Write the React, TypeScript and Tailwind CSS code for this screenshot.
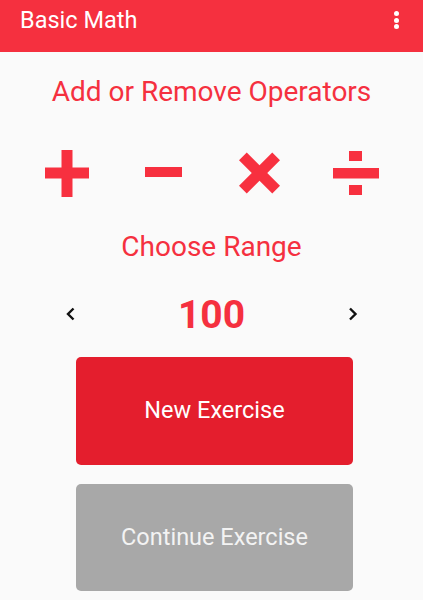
import React from 'react';

const red = 'text-[#f5303f]';

const OperatorIcon: React.FC<{ kind: 'plus' | 'minus' | 'times' | 'divide' }> = ({ kind }) => {
    if (kind === 'plus') {
        return (
            <svg width="44" height="48" viewBox="0 0 44 48" className="fill-[#f7303f]">
                <rect x="16.5" y="0" width="11" height="47" />
                <rect x="0" y="17.5" width="44" height="11" />
            </svg>
        );
    }
    if (kind === 'minus') {
        return (
            <svg width="38" height="48" viewBox="0 0 38 48" className="fill-[#f7303f]">
                <rect x="0" y="17" width="37" height="10" />
            </svg>
        );
    }
    if (kind === 'times') {
        return (
            <svg width="42" height="48" viewBox="0 0 42 48" className="fill-[#f7303f]">
                <g transform="translate(20.5 23) rotate(45)">
                    <rect x="-23.5" y="-5.5" width="47" height="11" />
                    <rect x="-5.5" y="-23.5" width="11" height="47" />
                </g>
            </svg>
        );
    }
    return (
        <svg width="46" height="48" viewBox="0 0 46 48" className="fill-[#f7303f]">
            <rect x="16" y="1" width="13" height="10" />
            <rect x="0" y="18" width="46" height="10.5" />
            <rect x="16" y="35" width="13" height="10" />
        </svg>
    );
};

const Chevron: React.FC<{ dir: 'left' | 'right' }> = ({ dir }) => (
    <svg width="12" height="14" viewBox="0 0 12 14" fill="none" stroke="#111" strokeWidth="2.4" className="mb-[4px]">
        {dir === 'left' ? <path d="M9.5 1.5 4 7 9.5 12.5" /> : <path d="M3 1.5 8.5 7 3 12.5" />}
    </svg>
);

export default function App() {
    return (
        <div className="w-[423px] h-[600px] bg-[#fafafa] overflow-hidden font-['Roboto',sans-serif]">
            <header className="h-[52px] bg-[#f5303f] flex items-start justify-between pl-5 pr-[24px]">
                <h1 className="text-white text-[23.5px] leading-none mt-[9px]">Basic Math</h1>
                <div className="flex flex-col gap-[1.5px] mt-[11px]">
                    <span className="w-[5px] h-[5px] rounded-full bg-white" />
                    <span className="w-[5px] h-[5px] rounded-full bg-white" />
                    <span className="w-[5px] h-[5px] rounded-full bg-white" />
                </div>
            </header>

            <main className="flex flex-col items-center">
                <h2 className={`${red} text-[28px] leading-none mt-[26px]`}>Add or Remove Operators</h2>

                <div className="w-full flex items-center pl-[45px] mt-[44px]">
                    <OperatorIcon kind="plus" />
                    <div className="ml-[56px]">
                        <OperatorIcon kind="minus" />
                    </div>
                    <div className="ml-[56px]">
                        <OperatorIcon kind="times" />
                    </div>
                    <div className="ml-[52px]">
                        <OperatorIcon kind="divide" />
                    </div>
                </div>

                <h2 className={`${red} text-[28px] leading-none mt-[35px]`}>Choose Range</h2>

                <div className="w-full flex items-center justify-between pl-[64px] pr-[64px] mt-[35px]">
                    <Chevron dir="left" />
                    <span className={`${red} font-bold text-[39px] leading-none`}>100</span>
                    <Chevron dir="right" />
                </div>

                <button className="mt-[22px] ml-[6px] w-[277px] h-[108px] rounded-[5px] bg-[#e41e2d] text-white text-[23.5px]">
                    New Exercise
                </button>
                <button className="mt-[19px] ml-[6px] w-[277px] h-[107px] rounded-[5px] bg-[#a8a8a8] text-[#f3f3f3] text-[23.5px]">
                    Continue Exercise
                </button>
            </main>
        </div>
    );
}
